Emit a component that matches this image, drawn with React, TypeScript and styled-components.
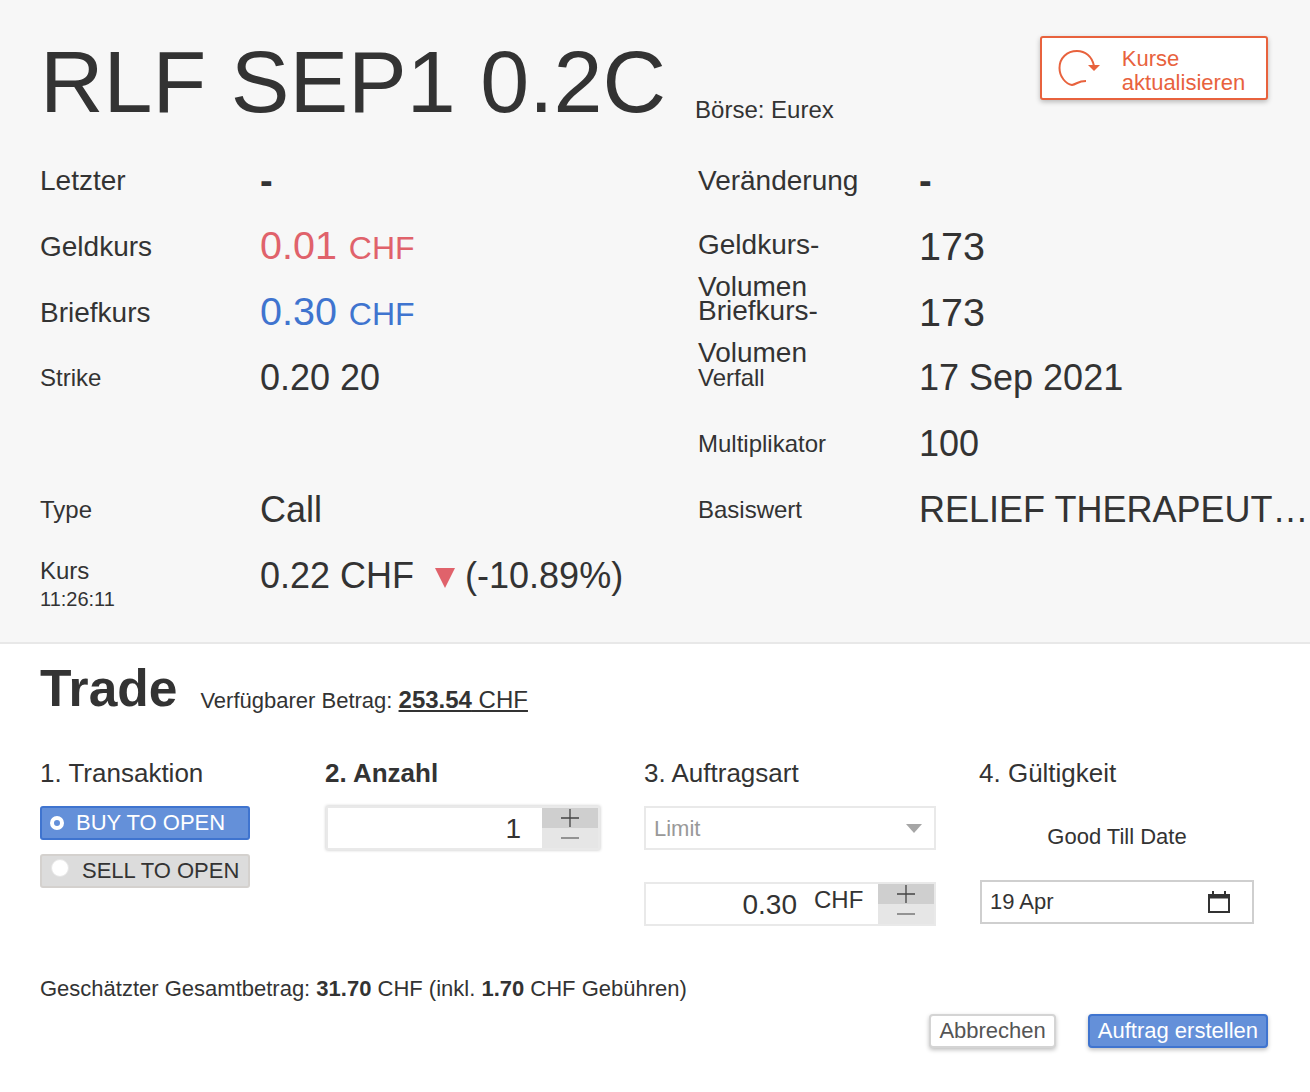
import { createGlobalStyle, styled } from "styled-components";

const GlobalStyle = createGlobalStyle`
  html, body {
    margin: 0;
    padding: 0;
    background: #fff;
    color: #333;
    font-family: "Liberation Sans", Arial, sans-serif;
  }
`;

const Page = styled.div`
  width: 1310px;
  height: 1092px;
  overflow: hidden;
`;

const QuotePanel = styled.section`
  box-sizing: border-box;
  height: 644px;
  padding: 0 0 0 40px;
  background: #f7f7f7;
  border-bottom: 2px solid #e8e8e8;
`;

const Header = styled.div`
  display: flex;
  align-items: flex-start;
  height: 147px;
`;

const Symbol = styled.h1`
  margin: 32px 0 0;
  font-size: 88px;
  line-height: 100px;
  font-weight: 400;
  white-space: nowrap;
`;

const Exchange = styled.span`
  margin: 96px 0 0 29px;
  font-size: 24px;
  line-height: 27px;
  white-space: nowrap;
`;

const RefreshButton = styled.button`
  box-sizing: border-box;
  display: flex;
  align-items: center;
  width: 228px;
  height: 64px;
  margin: 36px 0 0 206px;
  padding: 0 0 0 16px;
  background: #fff;
  border: 2px solid #e8623d;
  border-radius: 3px;
  box-shadow: 0 2px 5px rgba(0, 0, 0, 0.25);
  color: #e8623d;
  font: 400 22px/24px "Liberation Sans", Arial, sans-serif;
  text-align: left;
`;

const RefreshLabel = styled.span`
  margin: 5px 0 0 20px;
`;

const Facts = styled.div`
  display: grid;
  grid-template-columns: 220px 438px 221px 1fr;
  grid-auto-rows: 66px;
`;

const Label = styled.div<{ $size?: number }>`
  align-self: center;
  margin-top: ${({ $size }) => ($size ? 0 : 2)}px;
  font-size: ${({ $size }) => $size ?? 28}px;
  line-height: 24px;
`;

const WrappedLabel = styled.div`
  align-self: start;
  margin-top: 11px;
  font-size: 28px;
  line-height: 42px;
`;

const TimedLabel = styled.div`
  align-self: start;
  margin-top: 16px;
  font-size: 24px;
  line-height: 24px;
`;

const Value = styled.div<{ $color?: string; $large?: boolean }>`
  align-self: center;
  color: ${({ $color }) => $color ?? "#333"};
  font-size: ${({ $large }) => ($large ? 39.5 : 36)}px;
  line-height: 44px;
  white-space: nowrap;
  overflow: hidden;
  text-overflow: ellipsis;
`;

const Dash = styled.div`
  align-self: center;
  margin-top: 2px;
  font-size: 38px;
  font-weight: 700;
  line-height: 44px;
`;

const Unit = styled.span`
  margin-left: 1px;
  font-size: 32px;
`;

const DownArrow = styled.span`
  display: inline-block;
  margin: 0 10px 0 21px;
  border-left: 10px solid transparent;
  border-right: 10px solid transparent;
  border-top: 20px solid #e0626b;
`;

const SubLabel = styled.div`
  margin-top: 4px;
  font-size: 20px;
  line-height: 24px;
`;

const TradePanel = styled.section`
  padding: 0 40px;
`;

const TradeHeader = styled.div`
  display: flex;
  align-items: flex-start;
  height: 93px;
  padding-top: 14px;
  box-sizing: border-box;
`;

const TradeTitle = styled.h2`
  margin: 0;
  font-size: 51.5px;
  line-height: 60px;
  font-weight: 700;
`;

const Balance = styled.span`
  margin: 28px 0 0 23px;
  font-size: 22px;
  line-height: 28px;
`;

const BalanceLink = styled.span`
  font-size: 24px;
  text-decoration: underline;
`;

const Steps = styled.div`
  display: grid;
  grid-template-columns: 285px 319px 335px 1fr;
  height: 238px;
`;

const Step = styled.div`
  display: flex;
  flex-direction: column;
  align-items: flex-start;
`;

const StepTitle = styled.div<{ $active?: boolean }>`
  margin: 20px 0 17px;
  font-size: 26px;
  line-height: 32px;
  font-weight: ${({ $active }) => ($active ? 700 : 400)};
`;

const RadioButton = styled.div<{ $checked?: boolean }>`
  box-sizing: border-box;
  display: flex;
  align-items: center;
  width: 210px;
  height: 34px;
  margin-bottom: 14px;
  padding-left: ${({ $checked }) => ($checked ? 8 : 9)}px;
  border: 2px solid ${({ $checked }) => ($checked ? "#3f74cf" : "#d4d1ce")};
  border-radius: 3px;
  background: ${({ $checked }) => ($checked ? "#6490d9" : "#dcdcdc")};
  color: ${({ $checked }) => ($checked ? "#fff" : "#333")};
  font-size: 22px;
  white-space: nowrap;
`;

const RadioDot = styled.span<{ $checked?: boolean }>`
  box-sizing: border-box;
  flex-shrink: 0;
  width: ${({ $checked }) => ($checked ? 14 : 18)}px;
  height: ${({ $checked }) => ($checked ? 14 : 18)}px;
  margin-right: ${({ $checked }) => ($checked ? 12 : 13)}px;
  margin-top: ${({ $checked }) => ($checked ? 0 : -6)}px;
  border-radius: 50%;
  background: ${({ $checked }) => ($checked ? "#6490d9" : "#fff")};
  border: ${({ $checked }) => ($checked ? "4px solid #fff" : "1px solid #e6e6e6")};
`;

const Stepper = styled.div<{ $width: number; $inset?: number; $shadow?: boolean }>`
  box-sizing: border-box;
  display: flex;
  width: ${({ $width }) => $width}px;
  height: 44px;
  margin-left: ${({ $inset }) => $inset ?? 0}px;
  background: #fff;
  border: 2px solid #e9e9e9;
  box-shadow: ${({ $shadow }) => ($shadow ? "0 0 3px rgba(0, 0, 0, 0.25)" : "none")};
`;

const StepperValue = styled.div<{ $pad: number }>`
  flex: 1;
  padding-right: ${({ $pad }) => $pad}px;
  font-size: 28px;
  line-height: 42px;
  text-align: right;
`;

const StepperUnit = styled.div`
  width: 81px;
  padding-left: 17px;
  box-sizing: border-box;
  font-size: 24px;
  line-height: 31px;
`;

const StepperButtons = styled.div<{ $width: number }>`
  display: flex;
  flex-direction: column;
  width: ${({ $width }) => $width}px;
`;

const StepperButton = styled.div<{ $plus?: boolean }>`
  display: flex;
  flex: 1;
  align-items: center;
  justify-content: center;
  background: ${({ $plus }) => ($plus ? "#cfcfcf" : "#e6e6e6")};
`;

const Select = styled.div`
  box-sizing: border-box;
  display: flex;
  align-items: center;
  justify-content: space-between;
  width: 292px;
  height: 44px;
  margin-bottom: 32px;
  padding: 1px 12px 0 8px;
  background: #fff;
  border: 2px solid #e9e9e9;
  color: #999;
  font-size: 22px;
`;

const Caret = styled.span`
  border-left: 8px solid transparent;
  border-right: 8px solid transparent;
  border-top: 9px solid #a6a6a6;
`;

const ValidityLabel = styled.div`
  width: 276px;
  margin: 9px 0 21px;
  font-size: 22px;
  line-height: 44px;
  text-align: center;
`;

const DateField = styled.div`
  box-sizing: border-box;
  display: flex;
  align-items: center;
  justify-content: space-between;
  width: 274px;
  height: 44px;
  margin-left: 1px;
  padding: 0 21px 0 8px;
  background: #fff;
  border: 2px solid #cfcfcf;
  font-size: 22px;
`;

const Total = styled.div`
  font-size: 22px;
  line-height: 28px;
`;

const Strong = styled.strong`
  font-weight: 700;
`;

const Actions = styled.div`
  display: flex;
  justify-content: flex-end;
  gap: 32px;
  margin: 11px 2px 0 0;
`;

const ActionButton = styled.button<{ $primary?: boolean }>`
  box-sizing: border-box;
  height: 34px;
  padding: 0 8px;
  border: 2px solid ${({ $primary }) => ($primary ? "#3f74cf" : "#d4d4d4")};
  border-radius: 4px;
  background: ${({ $primary }) => ($primary ? "#6490d9" : "#fff")};
  box-shadow: 0 2px 4px rgba(0, 0, 0, 0.25);
  color: ${({ $primary }) => ($primary ? "#fff" : "#555")};
  font: 400 22px "Liberation Sans", Arial, sans-serif;
`;

const Plus = () => (
  <svg width="18" height="18" viewBox="0 0 18 18">
    <path d="M0 9h18M9 0v18" stroke="#444" strokeWidth="1.3" fill="none" />
  </svg>
);

const Minus = () => (
  <svg width="18" height="4" viewBox="0 0 18 4">
    <path d="M0 2h18" stroke="#666" strokeWidth="1.3" fill="none" />
  </svg>
);

const App = () => (
  <Page>
    <GlobalStyle />
    <QuotePanel>
      <Header>
        <Symbol>RLF SEP1 0.2C</Symbol>
        <Exchange>Börse: Eurex</Exchange>
        <RefreshButton>
          <svg width="44" height="40" viewBox="0 0 44 40">
            <path
              d="M36 18C34 8 27 3 19 3C9 3 1.500 10 1.500 20C1.500 29 8 36 14 37C19 36 20 33 28 33"
              stroke="#e8623d"
              strokeWidth="2"
              fill="none"
            />
            <path d="M30 17L42 17L36 23Z" fill="#e8623d" />
          </svg>
          <RefreshLabel>
            Kurse
            <br />
            aktualisieren
          </RefreshLabel>
        </RefreshButton>
      </Header>
      <Facts>
        <Label>Letzter</Label>
        <Dash>-</Dash>
        <Label>Veränderung</Label>
        <Dash>-</Dash>

        <Label>Geldkurs</Label>
        <Value $large $color="#e0626b">0.01 <Unit>CHF</Unit></Value>
        <WrappedLabel>Geldkurs-<br />Volumen</WrappedLabel>
        <Value $large>173</Value>

        <Label>Briefkurs</Label>
        <Value $large $color="#3f74cf">0.30 <Unit>CHF</Unit></Value>
        <WrappedLabel>Briefkurs-<br />Volumen</WrappedLabel>
        <Value $large>173</Value>

        <Label $size={24}>Strike</Label>
        <Value>0.20 20</Value>
        <Label $size={24}>Verfall</Label>
        <Value>17 Sep 2021</Value>

        <div />
        <div />
        <Label $size={24}>Multiplikator</Label>
        <Value>100</Value>

        <Label $size={24}>Type</Label>
        <Value>Call</Value>
        <Label $size={24}>Basiswert</Label>
        <Value>RELIEF THERAPEUTICS HOLDING</Value>

        <TimedLabel>
          Kurs
          <SubLabel>11:26:11</SubLabel>
        </TimedLabel>
        <Value>0.22 CHF<DownArrow />(-10.89%)</Value>
      </Facts>
    </QuotePanel>
    <TradePanel>
      <TradeHeader>
        <TradeTitle>Trade</TradeTitle>
        <Balance>
          Verfügbarer Betrag:{" "}
          <BalanceLink><Strong>253.54</Strong> CHF</BalanceLink>
        </Balance>
      </TradeHeader>
      <Steps>
        <Step>
          <StepTitle>1. Transaktion</StepTitle>
          <RadioButton $checked><RadioDot $checked />BUY TO OPEN</RadioButton>
          <RadioButton><RadioDot />SELL TO OPEN</RadioButton>
        </Step>
        <Step>
          <StepTitle $active>2. Anzahl</StepTitle>
          <Stepper $width={274} $inset={1} $shadow>
            <StepperValue $pad={21}>1</StepperValue>
            <StepperButtons $width={56}>
              <StepperButton $plus><Plus /></StepperButton>
              <StepperButton><Minus /></StepperButton>
            </StepperButtons>
          </Stepper>
        </Step>
        <Step>
          <StepTitle>3. Auftragsart</StepTitle>
          <Select>Limit<Caret /></Select>
          <Stepper $width={292}>
            <StepperValue $pad={0}>0.30</StepperValue>
            <StepperUnit>CHF</StepperUnit>
            <StepperButtons $width={56}>
              <StepperButton $plus><Plus /></StepperButton>
              <StepperButton><Minus /></StepperButton>
            </StepperButtons>
          </Stepper>
        </Step>
        <Step>
          <StepTitle>4. Gültigkeit</StepTitle>
          <ValidityLabel>Good Till Date</ValidityLabel>
          <DateField>
            19 Apr
            <svg width="24" height="24" viewBox="0 0 24 24">
              <path
                d="M2 5h20v17h-20zM6 1v4M18 1v4"
                stroke="#333"
                strokeWidth="2"
                fill="none"
              />
              <path d="M2 7h20" stroke="#333" strokeWidth="3" fill="none" />
            </svg>
          </DateField>
        </Step>
      </Steps>
      <Total>
        Geschätzter Gesamtbetrag: <Strong>31.70</Strong> CHF (inkl. <Strong>1.70</Strong> CHF Gebühren)
      </Total>
      <Actions>
        <ActionButton>Abbrechen</ActionButton>
        <ActionButton $primary>Auftrag erstellen</ActionButton>
      </Actions>
    </TradePanel>
  </Page>
);

export default App;
